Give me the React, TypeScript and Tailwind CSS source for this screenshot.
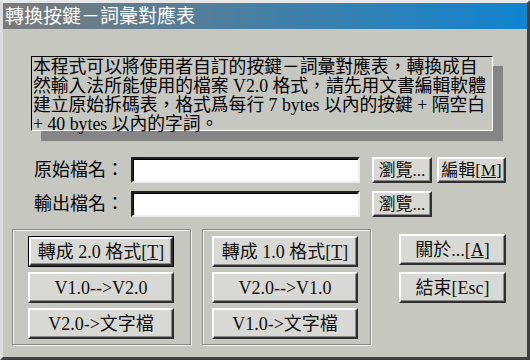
import React from "react";

const font = { fontFamily: '"Liberation Serif", "Noto Sans CJK TC", serif' };

function Btn({
  children,
  className = "",
  def = false,
}: {
  children: React.ReactNode;
  className?: string;
  def?: boolean;
}) {
  const inner = (
    <div
      className={
        "flex items-center justify-center bg-[#d8d8d4] border-2 border-t-white border-l-white border-r-[#303030] border-b-[#303030] shadow-[inset_-1px_-1px_0_#8a8a8a] text-[#111] whitespace-nowrap " +
        (def ? "w-full h-full" : className)
      }
    >
      {children}
    </div>
  );
  if (def) {
    return <div className={"border border-black " + className}>{inner}</div>;
  }
  return inner;
}

function Input() {
  return (
    <div className="w-[229px] h-[26px] bg-white border-2 border-t-[#202020] border-l-[#202020] border-r-[#eeeeee] border-b-[#eeeeee] shadow-[inset_1px_1px_0_#000]" />
  );
}

export default function App() {
  return (
    <div
      className="w-[530px] h-[360px] bg-[#c7c7c1] border-[3px] border-t-[#e8e8e8] border-l-[#dcdcdc] border-r-[#404040] border-b-[#404040] flex flex-col overflow-hidden"
      style={font}
    >
      <div className="h-[26px] shrink-0 bg-[linear-gradient(to_right,#7a7a7a,#1084d0)] flex items-center pl-[2px] text-white text-[19px] leading-none whitespace-nowrap">
        轉換按鍵－詞彙對應表
      </div>
      <div className="flex flex-col px-[9px]">
        <div className="ml-[19px] mt-[27px] w-[462px] h-[75px] border border-t-black border-l-black border-r-white border-b-white shadow-[10px_10px_0_#858585] text-[17.8px] leading-[19px] text-black whitespace-nowrap pl-[1px] pt-[1px]">
          本程式可以將使用者自訂的按鍵－詞彙對應表，轉換成自
          <br />
          然輸入法所能使用的檔案 V2.0 格式，請先用文書編輯軟體
          <br />
          建立原始拆碼表，格式爲每行 7 bytes 以內的按鍵 + 隔空白
          <br />+ 40 bytes 以內的字詞。
        </div>

        <div className="ml-[19px] mt-[26px] flex items-center">
          <div className="w-[100px] pr-[7px] text-right text-[18px] leading-none text-black whitespace-nowrap">
            原始檔名：
          </div>
          <Input />
          <Btn className="ml-[12px] w-[60px] h-[26px] text-[17px] leading-none">
            瀏覽...
          </Btn>
          <Btn className="ml-[5px] w-[69px] h-[26px] text-[17px] leading-none">
            編輯[<span className="underline">M</span>]
          </Btn>
        </div>

        <div className="ml-[19px] mt-[8px] flex items-center">
          <div className="w-[100px] pr-[7px] text-right text-[18px] leading-none text-black whitespace-nowrap">
            輸出檔名：
          </div>
          <Input />
          <Btn className="ml-[12px] w-[60px] h-[26px] text-[17px] leading-none">
            瀏覽...
          </Btn>
        </div>

        <div className="mt-[12px] flex items-start">
          <div className="w-[179px] h-[116px] border border-[#8a8a8a] shadow-[1px_1px_0_#f4f4f4,inset_1px_1px_0_#f4f4f4] pl-[15px] pt-[6px] flex flex-col gap-[5px] text-[18px] leading-none">
            <Btn def className="w-[146px] h-[31px]">
              轉成 2.0 格式[<span className="underline">T</span>]
            </Btn>
            <Btn className="w-[146px] h-[31px]">V1.0--&gt;V2.0</Btn>
            <Btn className="w-[146px] h-[31px]">V2.0-&gt;文字檔</Btn>
          </div>
          <div className="ml-[11px] w-[169px] h-[116px] border border-[#8a8a8a] shadow-[1px_1px_0_#f4f4f4,inset_1px_1px_0_#f4f4f4] pl-[9px] pt-[6px] flex flex-col gap-[5px] text-[18px] leading-none">
            <Btn className="w-[146px] h-[31px]">
              轉成 1.0 格式[<span className="underline">T</span>]
            </Btn>
            <Btn className="w-[146px] h-[31px]">V2.0--&gt;V1.0</Btn>
            <Btn className="w-[146px] h-[31px]">V1.0-&gt;文字檔</Btn>
          </div>
          <div className="ml-[28px] pt-[5px] flex flex-col gap-[7px] text-[18px] leading-none">
            <Btn className="w-[107px] h-[31px]">
              關於...[<span className="underline">A</span>]
            </Btn>
            <Btn className="w-[107px] h-[31px]">結束[Esc]</Btn>
          </div>
        </div>
      </div>
    </div>
  );
}
